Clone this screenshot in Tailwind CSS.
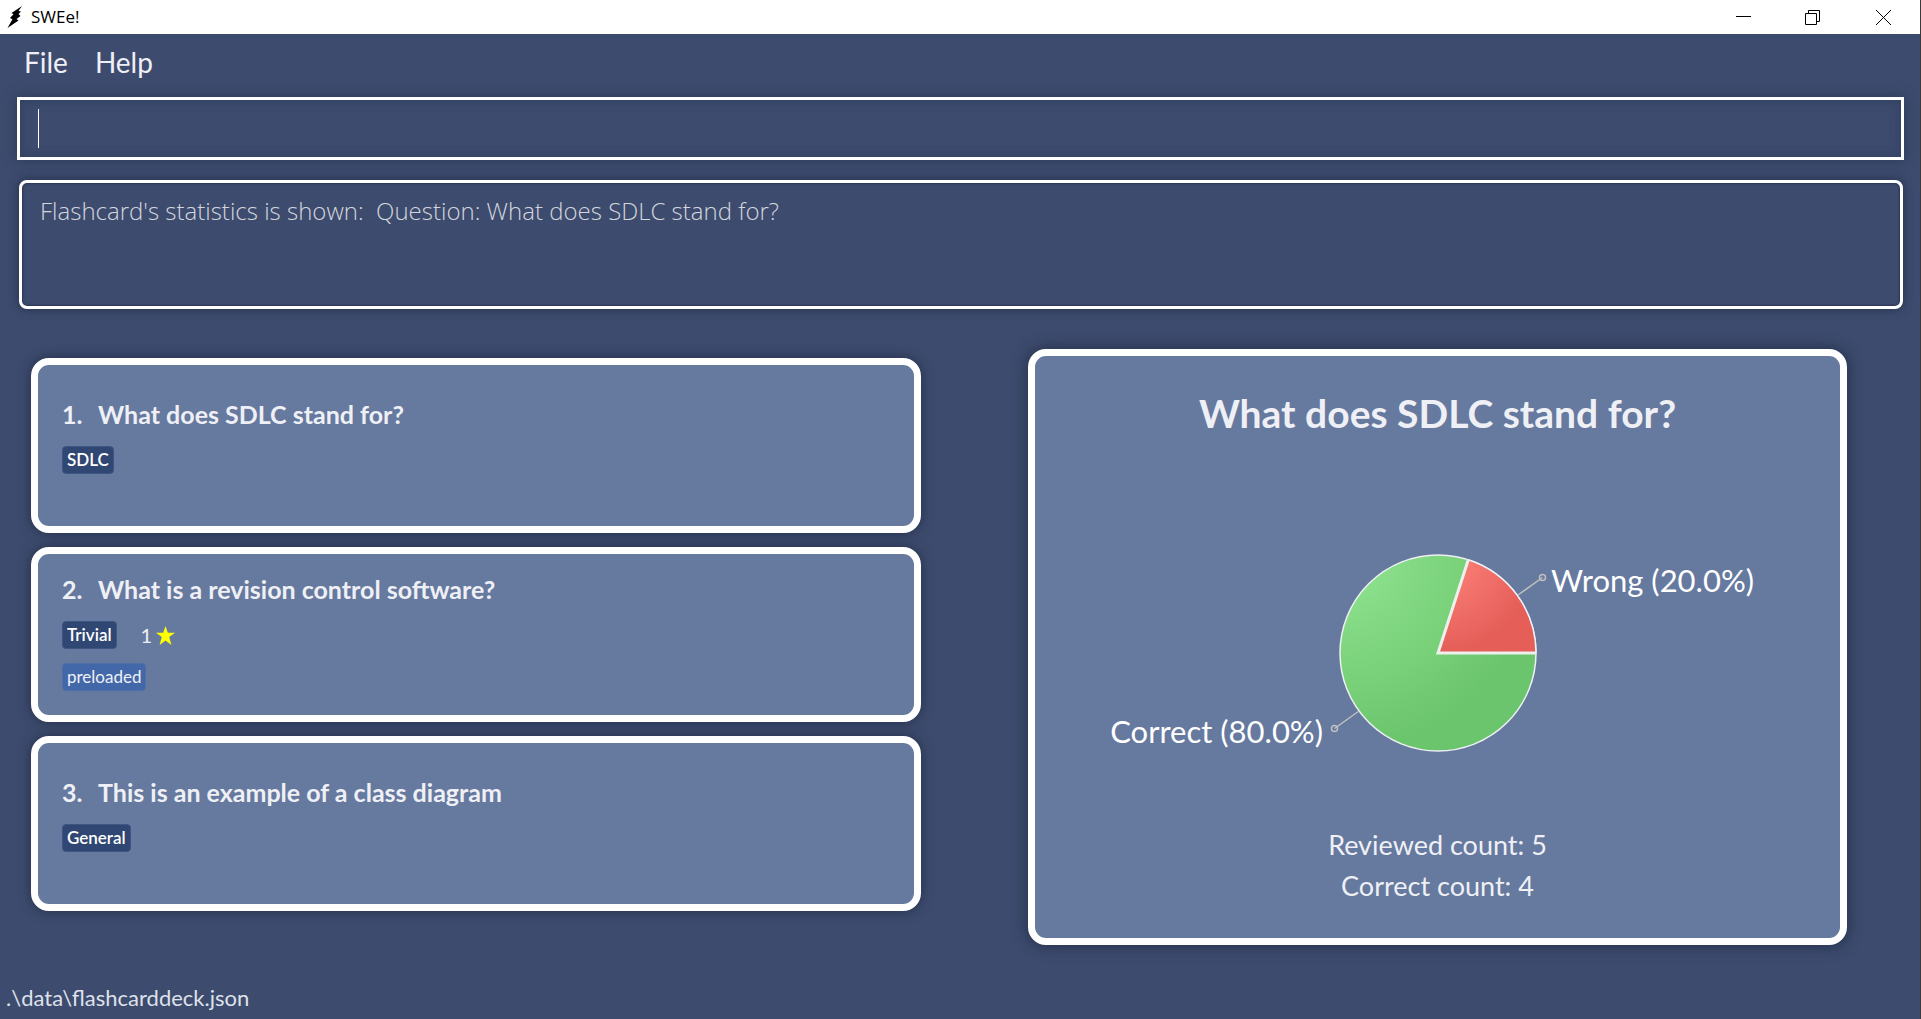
<!DOCTYPE html>
<html lang="en">
<head>
<meta charset="utf-8">
<title>SWEe!</title>
<script src="https://cdn.jsdelivr.net/npm/@tailwindcss/browser@4"></script>
</head>
<body class="flex min-h-screen flex-col border-r border-[#3a3a3a] bg-[#3d4b6e] font-['Lato',sans-serif] text-[#eff0f5]">

<header class="flex h-[34px] items-center bg-white text-black">
  <svg class="ml-[7px] h-[22px] w-[16px]" viewBox="0 0 16 22" aria-hidden="true"><path d="M15 0 4.500 7 6.500 8.200 3 12 5.500 13.200 0.500 22 11.500 14.500 9.500 13 13.500 10 11.500 8 14 5.500 11.500 5Z"/></svg>
  <h1 class="ml-2 font-['Open_Sans',sans-serif] text-[17px] leading-6">SWEe!</h1>
  <div class="ml-auto flex h-full">
    <button class="flex w-[69px] items-center justify-center" aria-label="Minimize"><svg class="size-[15px]" viewBox="0 0 15 15"><path d="M0 6.500h15" stroke="#000"/></svg></button>
    <button class="flex w-[69px] items-center justify-center" aria-label="Restore"><svg class="size-[15px]" viewBox="0 0 15 15" fill="none" stroke="#000"><path d="M.5 3.500h11v11H.5zM3.500 3V.5h11v11H12"/></svg></button>
    <button class="flex w-[73px] items-center justify-center" aria-label="Close"><svg class="size-[15px]" viewBox="0 0 15 15" stroke="#000"><path d="M0 0l15 15M15 0L0 15"/></svg></button>
  </div>
</header>

<nav class="flex h-[63px] gap-[27px] px-6 pt-[10px]">
  <button class="h-9 text-[28px] leading-9">File</button>
  <button class="h-9 text-[28px] leading-9">Help</button>
</nav>

<div class="relative mr-4 ml-[17px]">
  <input type="text" aria-label="Command" class="block h-[63px] w-full border-3 border-white bg-transparent px-5 text-[28px] shadow-[0_0_12px_#2b3a55,inset_0_0_12px_#2f3f5d] outline-none">
  <span class="absolute top-3 left-[21px] h-[39px] w-px bg-white"></span>
</div>

<textarea readonly aria-label="Result" class="mr-[17px] ml-[19px] mt-5 block h-[129px] resize-none rounded-lg border-3 border-white bg-transparent px-[18px] py-[10px] font-['Open_Sans',sans-serif] text-[24px] leading-9 font-light text-[#d3d6dd] shadow-[0_0_10px_1px_#28344f,inset_0_0_2px_1px_#2b3652] outline-none">Flashcard's statistics is shown:  Question: What does SDLC stand for?</textarea>

<main class="grid flex-1 grid-cols-2 items-start pt-10">
  <ol class="flex flex-col gap-[14px] pt-[9px] pr-[39px] pl-[31px]">
    <li class="flex min-h-[175px] flex-col items-start justify-center rounded-[18px] border-7 border-white bg-[#66799f] px-6 shadow-[0_0_12px_1px_#27334d]">
      <h2 class="flex text-[25px] leading-[33px] font-bold"><span class="w-9">1.</span>What does SDLC stand for?</h2>
      <div class="mt-[15px] flex h-7 items-center"><span class="rounded-sm border border-[#3f5582] bg-[#304673] px-1 text-[17px] leading-[26px] font-semibold text-white">SDLC</span></div>
      <div class="h-[19px]"></div>
    </li>
    <li class="flex min-h-[175px] flex-col items-start justify-center rounded-[18px] border-7 border-white bg-[#66799f] px-6 shadow-[0_0_12px_1px_#27334d]">
      <h2 class="flex text-[25px] leading-[33px] font-bold"><span class="w-9">2.</span>What is a revision control software?</h2>
      <div class="mt-[15px] flex h-7 items-center"><span class="rounded-sm border border-[#3f5582] bg-[#304673] px-1 text-[17px] leading-[26px] font-semibold text-white">Trivial</span><span class="ml-6 text-[20px] leading-7">1</span><svg class="ml-1 size-[19px]" viewBox="0 0 18 18" fill="#ff0" aria-label="star"><path d="M9 0l2.200 6.500H18l-5.500 4L14.600 18 9 13.700 3.400 18l2.100-7.500L0 6.500h6.800z"/></svg></div>
      <div class="mt-[14px] mb-[5px] flex h-7 items-center"><span class="rounded-sm border border-[#4f6fa8] bg-[#4268a9] px-1 text-[17px] leading-[26px]">preloaded</span></div>
    </li>
    <li class="flex min-h-[175px] flex-col items-start justify-center rounded-[18px] border-7 border-white bg-[#66799f] px-6 shadow-[0_0_12px_1px_#27334d]">
      <h2 class="flex text-[25px] leading-[33px] font-bold"><span class="w-9">3.</span>This is an example of a class diagram</h2>
      <div class="mt-[15px] flex h-7 items-center"><span class="rounded-sm border border-[#3f5582] bg-[#304673] px-1 text-[17px] leading-[26px] font-semibold text-white">General</span></div>
      <div class="h-[19px]"></div>
    </li>
  </ol>

  <section class="mr-[73px] ml-[68px] flex flex-col items-center rounded-[18px] border-7 border-white bg-[#66799f] py-8 shadow-[0_0_14px_2px_#27334d]">
    <h2 class="text-[39px] leading-[50px] font-bold">What does SDLC stand for?</h2>
    <svg class="mt-[100px] h-[230px] w-[700px]" viewBox="0 0 700 230" role="img" aria-label="Correct and wrong answers">
      <defs>
        <radialGradient id="green" gradientUnits="userSpaceOnUse" cx="252" cy="17" r="196"><stop stop-color="#92e692"/><stop offset="1" stop-color="#6bc56c"/></radialGradient>
        <radialGradient id="red" gradientUnits="userSpaceOnUse" cx="350" cy="17" r="98"><stop stop-color="#ff877f"/><stop offset="1" stop-color="#e55e58"/></radialGradient>
      </defs>
      <circle cx="350" cy="115" r="98" fill="url(#green)" stroke="#eef0f4" stroke-width="1.500"/>
      <path d="M350 115H448A98 98 0 0 0 380.300 21.800Z" fill="url(#red)"/>
      <path d="M448 115H350L380.300 21.800" fill="none" stroke="#eef0ee" stroke-width="3"/>
      <path d="M448 115A98 98 0 0 0 380.300 21.800" fill="none" stroke="#eef0f4" stroke-width="1.500"/>
      <g fill="none" stroke="#bfc0c0" stroke-width="1.500"><path d="M430 57l24.500-17.500M271 173l-24.500 17.500"/><circle cx="454.500" cy="39.500" r="3"/><circle cx="246.500" cy="190.500" r="3"/></g>
      <g fill="#fff" class="text-[31px]"><text x="463" y="54">Wrong (20.0%)</text><text x="235" y="205" text-anchor="end">Correct (80.0%)</text></g>
    </svg>
    <p class="mt-14 text-[27px] leading-[41px]">Reviewed count: 5</p>
    <p class="text-[27px] leading-[41px]">Correct count: 4</p>
  </section>
</main>

<footer class="px-[6px] pb-[7px] text-[22px] leading-7 text-[#dfe2ea]">.\data\flashcarddeck.json</footer>
</body>
</html>
